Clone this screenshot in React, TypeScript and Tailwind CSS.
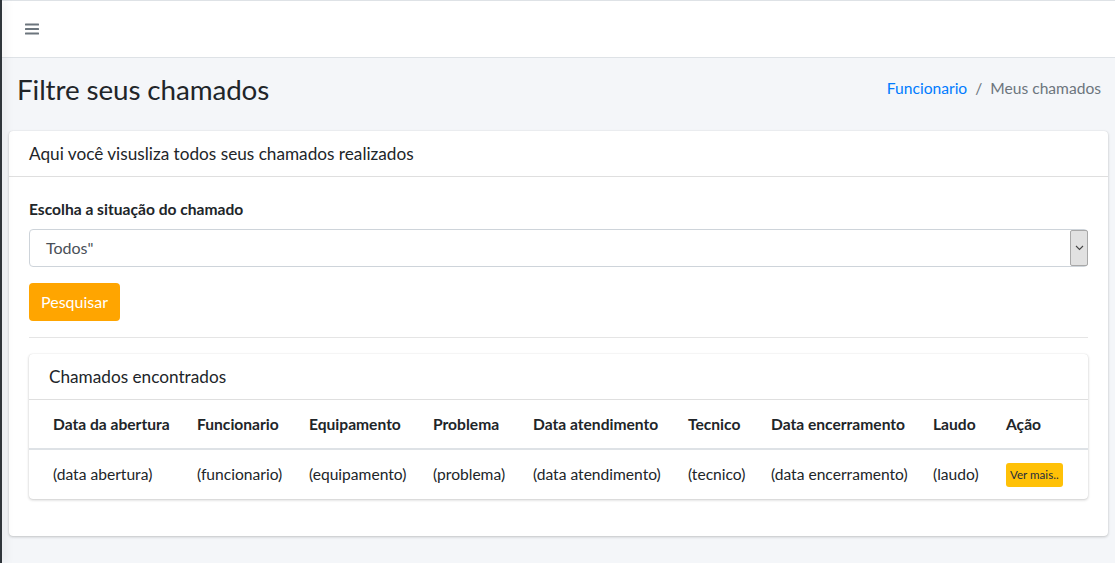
import React from 'react';

const columns = [
  { label: 'Data da abertura', value: '(data abertura)', w: 'w-[156px] pl-6' },
  { label: 'Funcionario', value: '(funcionario)', w: 'w-[112px]' },
  { label: 'Equipamento', value: '(equipamento)', w: 'w-[124px]' },
  { label: 'Problema', value: '(problema)', w: 'w-[100px]' },
  { label: 'Data atendimento', value: '(data atendimento)', w: 'w-[155px]' },
  { label: 'Tecnico', value: '(tecnico)', w: 'w-[83px]' },
  { label: 'Data encerramento', value: '(data encerramento)', w: 'w-[162px]' },
  { label: 'Laudo', value: '(laudo)', w: 'w-[73px]' },
];

function BarsIcon() {
  return (
    <svg width="14" height="12" viewBox="0 0 14 12" className="text-[#6c757d]">
      <rect x="0" y="0.5" width="14" height="2" rx="0.5" fill="currentColor" />
      <rect x="0" y="5" width="14" height="2" rx="0.5" fill="currentColor" />
      <rect x="0" y="9.5" width="14" height="2" rx="0.5" fill="currentColor" />
    </svg>
  );
}

export default function App() {
  return (
    <div className="flex min-h-screen bg-[#f4f6f9] text-[#212529] font-['Lato',sans-serif]">
      {/* sidebar collapsed edge */}
      <aside className="relative z-10 w-[2px] shrink-0 bg-[#2f353a] shadow-[2px_0_10px_rgba(0,0,0,0.2)]" />

      <div className="flex-1 min-w-0">
        <nav className="h-[58px] bg-white border-t border-b border-[#dee2e6] flex items-center pl-[23px]">
          <BarsIcon />
        </nav>

        <div className="px-[15px] pt-[14px] pb-[23px] flex items-start justify-between">
          <h1 className="text-[27.8px] leading-[36px] font-normal tracking-[-0.1px]">Filtre seus chamados</h1>
          <ol className="flex items-center text-[15.6px] leading-6 mt-[4px] mr-[-1px]">
            <li className="text-[#007bff]">Funcionario</li>
            <li className="text-[#6c757d] px-2">/</li>
            <li className="text-[#6c757d]">Meus chamados</li>
          </ol>
        </div>

        <div className="px-[7px]">
          <div className="bg-white rounded-[4px] shadow-[0_0_1px_rgba(0,0,0,0.125),0_1px_3px_rgba(0,0,0,0.2)]">
            <div className="px-5 h-[46px] flex items-center border-b border-[rgba(0,0,0,0.125)]">
              <h3 className="text-[17.2px]">Aqui você visusliza todos seus chamados realizados</h3>
            </div>

            <div className="px-5 pt-5 pb-[37px]">
              <label className="block font-bold text-[15.6px] leading-6 mb-2">Escolha a situação do chamado</label>
              <div className="h-[38px] border border-[#ced4da] rounded-[4px] flex items-center justify-between">
                <span className="pl-4 text-[16px] text-[#495057]">Todos"</span>
                <div className="h-[36px] w-[18px] mr-[-1px] bg-[#e1e1e1] border border-[#a8a8a8] rounded-[2px] flex items-center justify-center">
                  <svg width="9" height="6" viewBox="0 0 9 6">
                    <path d="M1 1l3.5 3.5L8 1" fill="none" stroke="#444" strokeWidth="1.1" />
                  </svg>
                </div>
              </div>
              <button className="mt-4 h-[38px] px-3 bg-[#ffa500] text-white rounded-[4px] text-[16px]">Pesquisar</button>
              <hr className="my-4 border-t border-[rgba(0,0,0,0.1)]" />

              <div className="bg-white rounded-[4px] shadow-[0_0_1px_rgba(0,0,0,0.125),0_1px_3px_rgba(0,0,0,0.2)]">
                <div className="px-5 h-[46px] flex items-center border-b border-[rgba(0,0,0,0.125)]">
                  <h3 className="text-[17.2px]">Chamados encontrados</h3>
                </div>
                <table className="w-full table-fixed border-collapse text-[15.6px]">
                  <thead>
                    <tr className="border-b-2 border-[#dee2e6]">
                      {columns.map((c) => (
                        <th key={c.label} className={`${c.w} p-3 text-left font-bold leading-6 whitespace-nowrap`}>
                          {c.label}
                        </th>
                      ))}
                      <th className="p-3 pr-6 text-left font-bold leading-6">Ação</th>
                    </tr>
                  </thead>
                  <tbody>
                    <tr>
                      {columns.map((c, i) => (
                        <td key={c.label} className={`p-3 leading-6 whitespace-nowrap ${i === 0 ? 'pl-6' : ''}`}>
                          {c.value}
                        </td>
                      ))}
                      <td className="p-3 pr-6">
                        <button className="h-[24px] px-[4px] bg-[#ffc107] rounded-[3px] text-[11.6px] text-[#1f2d3d] whitespace-nowrap">
                          Ver mais..
                        </button>
                      </td>
                    </tr>
                  </tbody>
                </table>
              </div>
            </div>
          </div>
        </div>
      </div>
    </div>
  );
}
